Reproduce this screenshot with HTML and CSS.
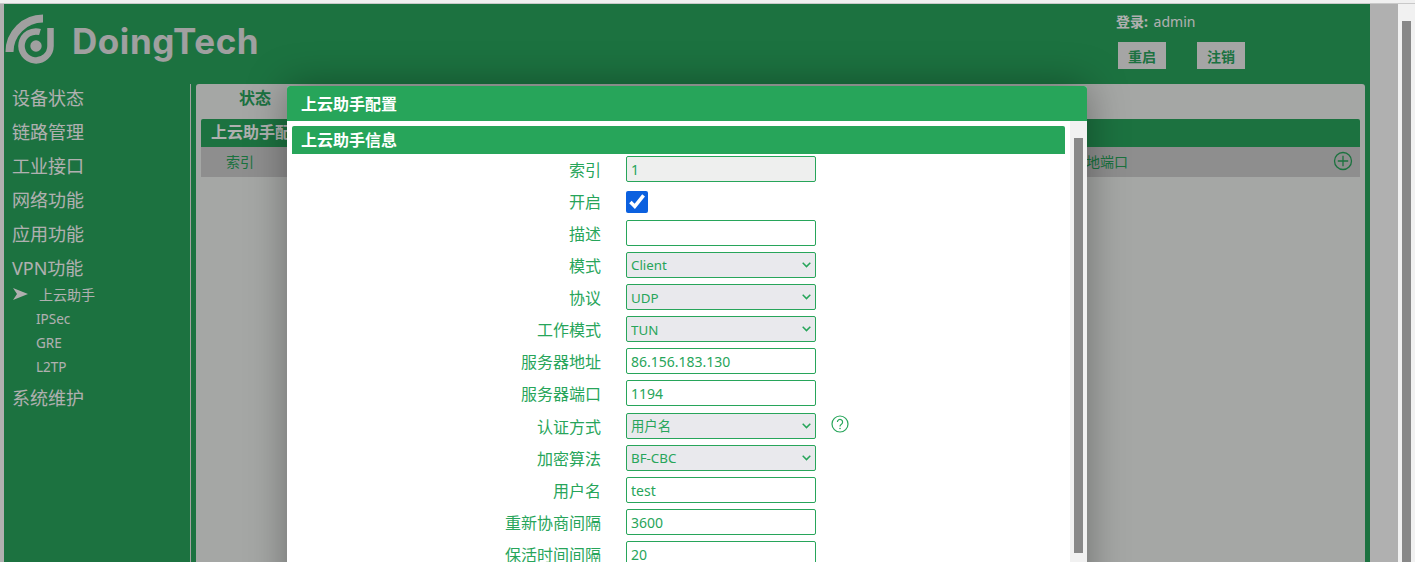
FILE: index.html
```html
<!DOCTYPE html>
<html lang="zh-CN">
<head>
<meta charset="utf-8">
<title>DoingTech</title>
<link rel="stylesheet" href="styles.css">
</head>
<body>
<div class="topline"></div>
<div class="window">
  <div class="app">
    <div class="shell">
      <header class="header">
        <div class="logo">
          <svg class="logo-mark" width="58" height="52" viewBox="0 0 58 52" aria-hidden="true">
            <g fill="none" stroke="#e8e8e8">
              <path d="M38 3.5 A33.5 33.5 0 0 0 4.5 37" stroke-width="8"/>
              <path d="M45.5 13 V31 A14.5 14.5 0 1 1 35 17" stroke-width="6.5"/>
            </g>
            <circle cx="31" cy="31" r="5.7" fill="#e8e8e8"/>
          </svg>
          <span class="logo-text">DoingTech</span>
        </div>
        <div class="account">
          <div class="login"><b>登录:</b> admin</div>
          <div class="actions">
            <button class="btn" type="button">重启</button>
            <button class="btn" type="button">注销</button>
          </div>
        </div>
      </header>
      <div class="main">
        <nav class="sidebar">
          <a class="nav-item">设备状态</a>
          <a class="nav-item">链路管理</a>
          <a class="nav-item">工业接口</a>
          <a class="nav-item">网络功能</a>
          <a class="nav-item">应用功能</a>
          <a class="nav-item">VPN功能</a>
          <div class="sub-list">
            <a class="sub-item active">
              <svg class="arrow" width="15" height="12" viewBox="0 0 15 12" aria-hidden="true"><polygon points="0,0 15,6 0,12 4,6" fill="#fff"/></svg>
              上云助手
            </a>
            <a class="sub-item">IPSec</a>
            <a class="sub-item">GRE</a>
            <a class="sub-item">L2TP</a>
          </div>
          <a class="nav-item">系统维护</a>
        </nav>
        <section class="panel">
          <div class="tabs"><span class="tab">状态</span></div>
          <div class="bar">上云助手配置</div>
          <div class="thead">
            <span class="th-index">索引</span>
            <span class="th-port">本地端口</span>
            <svg class="add" width="20" height="20" viewBox="0 0 20 20" aria-hidden="true">
              <circle cx="10" cy="10" r="8.5" fill="none" stroke="#27a55a" stroke-width="1.3"/>
              <path d="M10 4.8 V15.2 M4.8 10 H15.2" stroke="#27a55a" stroke-width="1.3"/>
            </svg>
          </div>
        </section>
      </div>
    </div>
    <div class="overlay"></div>
    <div class="modal">
      <div class="modal-title">上云助手配置</div>
      <div class="modal-body">
        <div class="modal-content">
          <div class="section">上云助手信息</div>
          <form class="form">
            <div class="row"><label class="label">索引</label><input class="field readonly" value="1" readonly></div>
            <div class="row"><label class="label">开启</label><input class="check" type="checkbox" checked></div>
            <div class="row"><label class="label">描述</label><input class="field" value=""></div>
            <div class="row"><label class="label">模式</label><select class="field pick"><option>Client</option></select></div>
            <div class="row"><label class="label">协议</label><select class="field pick"><option>UDP</option></select></div>
            <div class="row"><label class="label">工作模式</label><select class="field pick"><option>TUN</option></select></div>
            <div class="row"><label class="label">服务器地址</label><input class="field" value="86.156.183.130"></div>
            <div class="row"><label class="label">服务器端口</label><input class="field" value="1194"></div>
            <div class="row"><label class="label">认证方式</label><select class="field pick"><option>用户名</option></select>
              <svg class="help" width="18" height="18" viewBox="0 0 18 18" aria-hidden="true">
                <circle cx="9" cy="9" r="8" fill="none" stroke="#27a55a" stroke-width="1.2"/>
                <path d="M6.4 7 A2.6 2.6 0 1 1 10.4 9.2 C9.4 9.8 9 10.2 9 11.4" fill="none" stroke="#27a55a" stroke-width="1.2"/>
                <circle cx="9" cy="13.5" r=".8" fill="#27a55a"/>
              </svg>
            </div>
            <div class="row"><label class="label">加密算法</label><select class="field pick"><option>BF-CBC</option></select></div>
            <div class="row"><label class="label">用户名</label><input class="field" value="test"></div>
            <div class="row"><label class="label">重新协商间隔</label><input class="field" value="3600"></div>
            <div class="row"><label class="label">保活时间间隔</label><input class="field" value="20"></div>
          </form>
        </div>
        <div class="modal-scroll"><div class="modal-thumb"></div></div>
      </div>
    </div>
  </div>
  <div class="page-scroll"><div class="page-thumb"></div></div>
</div>
</body>
</html>
```
FILE: styles.css
```css
* { box-sizing: border-box; }
html, body { margin: 0; height: 100%; overflow: hidden; }
body {
  background: #fff;
  font-family: "Noto Sans", "Noto Sans CJK SC", sans-serif;
  font-size: 14px;
  color: #27a55a;
}
.topline { height: 4px; background: #f0f0f0; border-bottom: 1px solid #c9c9c9; }
.window { display: flex; height: 558px; }
.app { position: relative; width: 1398px; overflow: hidden; }
.shell { margin-left: 4px; width: 1366px; height: 100%; background: #29a55e; display: flex; flex-direction: column; }

.header { height: 80px; display: flex; justify-content: space-between; flex-shrink: 0; }
.logo { display: flex; align-items: flex-start; padding: 11px 0 0 1px; }
.logo-mark { display: block; overflow: visible; }
.logo-text {
  font-family: Inter, "Noto Sans", sans-serif;
  font-weight: 700;
  font-size: 35px;
  letter-spacing: .55px;
  line-height: 40px;
  color: #e8e8e8;
  margin: 6px 0 0 9px;
}
.account { width: 254px; padding-top: 8px; color: #fff; }
.login { font-size: 14px; line-height: 20px; word-spacing: 2px; }
.actions { display: flex; gap: 31px; margin: 10px 0 0 2px; }
.btn {
  width: 48px; height: 27px; padding: 0; border: 0; background: #f0f0f0;
  color: #29a55e; font: 700 14px "Noto Sans", "Noto Sans CJK SC", sans-serif;
}

.main { flex: 1; display: flex; min-height: 0; }
.sidebar { width: 187px; padding: 0 0 0 8px; border-right: 1px solid #ececec; flex-shrink: 0; color: #fff; }
.nav-item { display: block; height: 34px; font-size: 18px; line-height: 28px; color: #fff; }
.sub-list { margin-top: -5px; margin-bottom: 5px; }
.sub-item { display: flex; align-items: center; height: 24px; padding-left: 24px; font-size: 13.5px; color: #fff; }
.sub-item.active { padding: 0 0 2px 1px; font-size: 14px; gap: 11px; }
.arrow { display: block; }

.panel { width: 1169px; margin-left: 5px; background: #eff2ef; border-radius: 3px 3px 0 0; padding: 0 5px; }
.tabs { height: 35px; padding-left: 38px; }
.tab { display: block; font-weight: 700; font-size: 16px; line-height: 28px; color: #29a55e; }
.bar {
  height: 28px; background: #29a55e; color: #fff; border-radius: 2px 2px 0 0;
  font-size: 16px; font-weight: 700; line-height: 26px; padding-left: 10px;
}
.thead { height: 30px; background: #cecece; display: flex; align-items: center; position: relative; padding-left: 25px; }
.th-index { line-height: 30px; }
.th-port { margin-left: auto; margin-right: 232px; font-size: 14px; line-height: 30px; }
.add { position: absolute; right: 7px; top: 4px; }

.overlay { position: absolute; inset: 0; background: rgba(0, 0, 0, .31); }
.modal {
  position: absolute; left: 287px; top: 82px; width: 800px; height: 520px;
  background: #fff; border-radius: 3px 3px 0 0;
  box-shadow: 0 0 40px rgba(0, 0, 0, .35);
  display: flex; flex-direction: column;
}
.modal-title {
  height: 35px; background: #27a55a; color: #fff; border-radius: 3px 3px 0 0;
  font-size: 16px; font-weight: 700; line-height: 36px; padding-left: 14px; flex-shrink: 0;
}
.modal-body { flex: 1; display: flex; min-height: 0; }
.modal-content { flex: 1; padding: 5px 5px 0; }
.section {
  height: 28px; background: #27a55a; color: #fff; border-radius: 2px 2px 0 0;
  font-size: 16px; font-weight: 700; line-height: 28px; padding-left: 9px;
}
.form { padding-top: 1.5px; }
.row { height: 32.125px; display: flex; align-items: flex-start; }
.label { width: 309px; text-align: right; font-size: 16px; line-height: 28px; color: #27a55a; margin-right: 25px; flex-shrink: 0; }
.field {
  width: 190px; height: 26px; padding: 1px 4px 0; margin: 0;
  border: 1px solid #27a55a; border-radius: 2px; background: #fff;
  color: #27a55a; font: 14px "Noto Sans", "Noto Sans CJK SC", sans-serif; outline: 0;
}
.readonly { background: #eeefee; }
.pick {
  appearance: none;
  font-size: 13.33px;
  background: #e9e9ed url("data:image/svg+xml,%3Csvg xmlns='http://www.w3.org/2000/svg' width='9' height='6'%3E%3Cpath d='M.7 .8 4.5 4.6 8.3 .8' fill='none' stroke='%2327a55a' stroke-width='1.5'/%3E%3C/svg%3E") no-repeat right 4px center;
}
.check { width: 22px; height: 22px; margin: 3px 0 0 0; accent-color: #0b60df; }
.help { margin: 2px 0 0 15px; }
.modal-scroll { width: 17px; background: #f1f1f1; padding: 17px 4px 0; flex-shrink: 0; }
.modal-thumb { height: 415px; background: #888; }

.page-scroll { flex: 1; background: #f1f1f1; padding: 17px 4px 0; }
.page-thumb { height: 100%; width: 9px; background: #888; }
```
